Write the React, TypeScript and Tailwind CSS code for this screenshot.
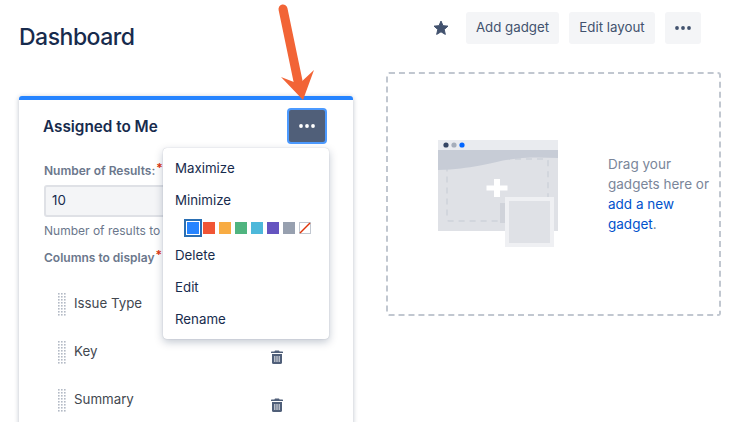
import React from "react";

const Dots = ({ color }: { color: string }) => (
  <svg width="16" height="4" viewBox="0 0 16 4" fill={color}>
    <circle cx="2" cy="2" r="1.9" />
    <circle cx="8" cy="2" r="1.9" />
    <circle cx="14" cy="2" r="1.9" />
  </svg>
);

const Trash = () => (
  <svg width="12" height="14" viewBox="0 0 12 14" fill="#505f79">
    <path d="M4 0.5h4l.6 1H11.4a.6.6 0 0 1 .6.6V3H0V2.1a.6.6 0 0 1 .6-.6H3.4z" />
    <path d="M1 4h10v8.4A1.6 1.6 0 0 1 9.4 14H2.6A1.6 1.6 0 0 1 1 12.4z" />
    <rect x="3.2" y="6" width="1.2" height="6" fill="#fff" opacity=".75" />
    <rect x="5.4" y="6" width="1.2" height="6" fill="#fff" opacity=".75" />
    <rect x="7.6" y="6" width="1.2" height="6" fill="#fff" opacity=".75" />
  </svg>
);

const Grip = () => (
  <svg width="8" height="23" viewBox="0 0 8 23" fill="#b3bac5">
    {[0, 1, 2, 3, 4, 5, 6, 7].map((r) =>
      [0, 1, 2].map((c) => <rect key={`${r}-${c}`} x={c * 3} y={r * 3} width="1.6" height="1.6" />)
    )}
  </svg>
);

const Row = ({ label, trash }: { label: string; trash?: boolean }) => (
  <div className="flex h-12 items-start">
    <div className="ml-[14px] mt-[5px] w-[16px] shrink-0">
      <Grip />
    </div>
    <span className="mt-[5px] text-[13.3px] leading-[20px] text-[#42474f]">{label}</span>
    {trash && (
      <div className="ml-auto mr-[46px] mt-[14px]">
        <Trash />
      </div>
    )}
  </div>
);

const swatches = ["#f15535", "#f8ac43", "#4fb47f", "#4db8da", "#6554c0", "#97a0af"];

const MenuItem = ({ label, className = "" }: { label: string; className?: string }) => (
  <div className={`px-3 text-[13.3px] leading-[20px] text-[#172b4d] ${className}`}>{label}</div>
);

const Illustration = () => (
  <svg width="120" height="108" viewBox="0 0 120 108" className="shrink-0">
    <rect x="0" y="0" width="120" height="91" fill="#dfe1e6" />
    <rect x="0" y="0" width="120" height="10" fill="#e9ebef" />
    <rect x="9" y="19" width="101" height="62" rx="2" fill="none" stroke="#ced2da" strokeWidth="1.5" strokeDasharray="6 5" />
    <path d="M0 10h120v8c-18-1-36-1-52 2-16 3-34 9-68 10z" fill="#c7ccd6" />
    <circle cx="8" cy="5" r="2.6" fill="#344563" />
    <circle cx="16" cy="5" r="2.6" fill="#a5adba" />
    <circle cx="24" cy="5" r="2.6" fill="#0065ff" />
    <path d="M56 39h6v6.500h7.500v5H62v6.500h-6v-6.500h-7.500v-5H56z" fill="#fff" />
    <rect x="62" y="63" width="10" height="20" fill="#d0d3da" />
    <rect x="67" y="57" width="49" height="50" fill="#eff0f3" />
    <rect x="71" y="61" width="41" height="42" fill="#dfe1e6" />
  </svg>
);

export default function App() {
  return (
    <div
      className="relative h-[422px] w-[745px] overflow-hidden bg-white px-[19px] pt-3"
      style={{ fontFamily: "Inter, 'Noto Sans', sans-serif" }}
    >
      <header className="flex h-8 items-center">
        <h1 className="mt-[18px] text-[23px] font-medium leading-[32px] tracking-[-0.5px] text-[#172b4d]">Dashboard</h1>
        <div className="ml-auto mr-[25px] flex items-center gap-[10px]">
          <svg width="16" height="16" viewBox="0 0 24 24" fill="#42526e" className="mr-[7px]">
            <path d="M12 1.6l3 6.9 7.500.7-5.700 5 1.700 7.400L12 17.700l-6.500 3.900 1.700-7.400-5.700-5 7.500-.7z" stroke="#42526e" strokeWidth="1.500" strokeLinejoin="round" />
          </svg>
          <button className="h-8 w-[93px] rounded-[3px] bg-[#f4f5f7] text-[13.3px] text-[#42526e]">Add gadget</button>
          <button className="h-8 w-[86px] rounded-[3px] bg-[#f4f5f7] text-[13.3px] text-[#42526e]">Edit layout</button>
          <button className="flex h-8 w-9 items-center justify-center rounded-[3px] bg-[#f4f5f7]">
            <Dots color="#42526e" />
          </button>
        </div>
      </header>

      <div className="mt-7 flex items-start gap-[33px]">
        <section className="relative mt-6 h-[400px] w-[334px] shrink-0 rounded-t-[3px] border-t-4 border-[#2684ff] bg-white shadow-[0_1px_5px_rgba(9,30,66,0.28)]">
          <div className="flex items-center justify-between pl-6 pr-[26px] pt-2">
            <h2 className="mt-[2px] text-[15.300px] font-semibold leading-[20px] text-[#172b4d]">Assigned to Me</h2>
            <button className="flex h-9 w-10 items-center justify-center rounded-[4px] border-2 border-[#4c9aff] bg-[#505f79]">
              <Dots color="#ffffff" />
            </button>
          </div>

          <div className="pl-[25px] pr-6 pt-[19px]">
            <div className="text-[12px] font-semibold leading-[16px] text-[#6b778c]">
              Number of Results:<span className="relative -top-[3px] ml-[1px] text-[#de350b]">*</span>
            </div>
            <div className="mt-[6px] flex h-[32px] w-[200px] items-center rounded-[3px] border-2 border-[#dfe1e6] bg-[#f4f5f7] px-[6px] text-[13.3px] text-[#172b4d]">
              10
            </div>
            <div className="mt-[6px] text-[12px] leading-[16px] text-[#6b778c]">Number of results to display</div>
            <div className="mt-[11px] text-[12px] font-semibold leading-[16px] text-[#6b778c]">
              Columns to display<span className="relative -top-[3px] ml-[1px] text-[#de350b]">*</span>
            </div>
            <div className="mt-[22px]">
              <Row label="Issue Type" />
              <Row label="Key" trash />
              <Row label="Summary" trash />
            </div>
          </div>

          <div className="absolute left-[144px] top-[48px] h-[191px] w-[166px] rounded-[4px] bg-white pt-[10px] shadow-[0_3px_9px_rgba(9,30,66,0.25),0_0_1px_rgba(9,30,66,0.3)]">
            <MenuItem label="Maximize" />
            <MenuItem label="Minimize" className="mt-3" />
            <div className="ml-[21px] mt-[9px] flex h-[18px] items-center gap-1">
              <div className="mr-[-3px] h-[18px] w-[18px] border-2 border-[#2a6fb3] bg-white p-px">
                <div className="h-full w-full bg-[#2684ff]" />
              </div>
              {swatches.map((c) => (
                <div key={c} className="h-3 w-3" style={{ backgroundColor: c }} />
              ))}
              <svg width="12" height="12" viewBox="0 0 12 12">
                <rect x=".5" y=".5" width="11" height="11" fill="#fff" stroke="#c1c7d0" />
                <path d="M1 11L11 1" stroke="#de350b" strokeWidth="1.4" />
              </svg>
            </div>
            <MenuItem label="Delete" className="mt-[8px]" />
            <MenuItem label="Edit" className="mt-3" />
            <MenuItem label="Rename" className="mt-3" />
          </div>
        </section>

        <section className="flex h-[244px] w-[335px] shrink-0 items-center rounded-[3px] border-2 border-dashed border-[#c1c7d0] pb-[1px] pl-[50px]">
          <Illustration />
          <p className="ml-[50px] text-[13.5px] leading-[20px] text-[#7a869a]">
            Drag your
            <br />
            gadgets here or
            <br />
            <span className="text-[#0052cc]">add a new</span>
            <br />
            <span className="text-[#0052cc]">gadget</span>.
          </p>
        </section>
      </div>

      <svg width="44" height="104" viewBox="0 0 44 104" className="absolute left-[272px] top-0">
        <path d="M11 9l15 72" stroke="#f26436" strokeWidth="9" strokeLinecap="round" fill="none" />
        <path d="M9 77l18 7 15-14-11 30z" fill="#f26436" />
      </svg>
    </div>
  );
}
